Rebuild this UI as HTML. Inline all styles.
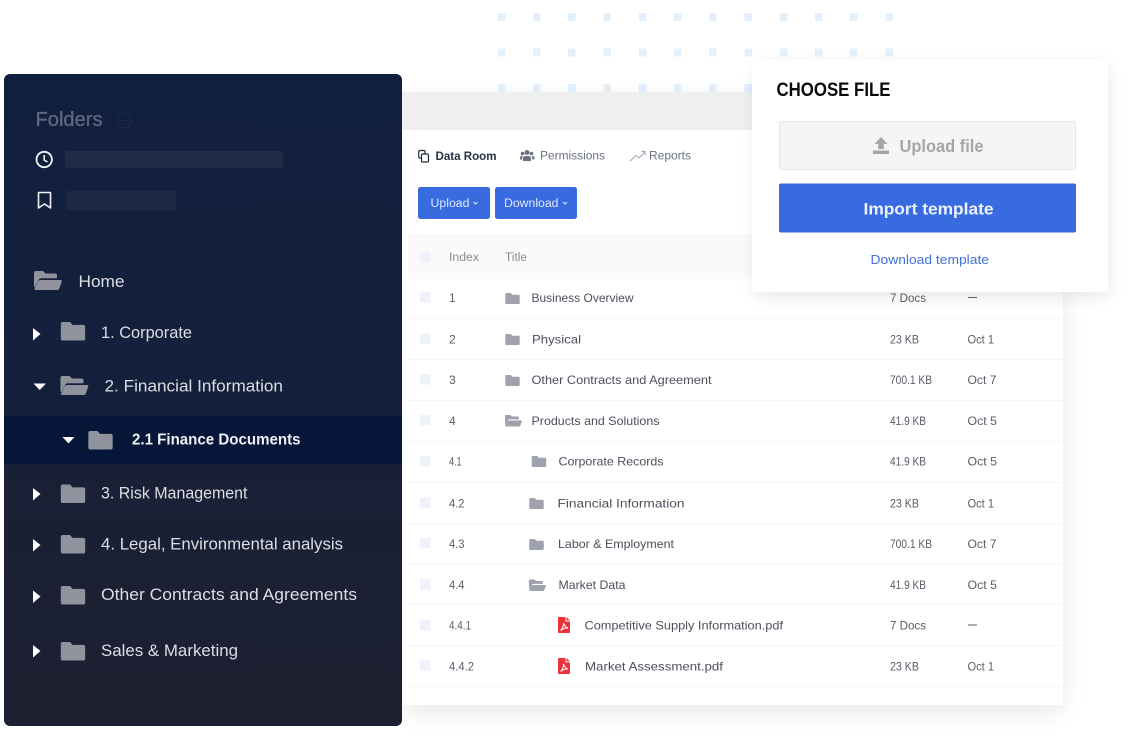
<!DOCTYPE html>
<html><head><meta charset="utf-8"><style>
html,body{margin:0;padding:0;background:#fff;width:1142px;height:748px;overflow:hidden}
svg{display:block;filter:blur(.3px)}
text{font-family:"Liberation Sans",sans-serif}
.s{font-size:16.5px;fill:#dcdee3}
.t{font-size:12px;fill:#4d4f5c}
.g{font-size:12px;fill:#5a5c68}
</style></head><body>
<svg width="1142" height="748" viewBox="0 0 1142 748" xmlns="http://www.w3.org/2000/svg">
<defs>
<linearGradient id="side" x1="0" y1="0" x2="0" y2="1"><stop offset="0" stop-color="#111f3f"/><stop offset=".5" stop-color="#14203b"/><stop offset=".65" stop-color="#1a2035"/><stop offset="1" stop-color="#1c2030"/></linearGradient>
<filter id="sh" x="-20%" y="-20%" width="140%" height="140%"><feGaussianBlur stdDeviation="12"/></filter>
<filter id="sh2" x="-20%" y="-20%" width="140%" height="140%"><feGaussianBlur stdDeviation="9"/></filter>
<symbol id="f" viewBox="0 0 25 19"><path d="M2 0H9.500L12 3H23A2 2 0 0 1 25 5V17A2 2 0 0 1 23 19H2A2 2 0 0 1 0 17V2A2 2 0 0 1 2 0Z"/></symbol>
<symbol id="o" viewBox="0 0 28 19"><path d="M0 2A2 2 0 0 1 2 0H9L11.500 2.500H21A2 2 0 0 1 23 4.500V7.300H7.500Q5.500 7.300 4.700 9L1 16H0ZM6.500 9H26.500Q28.300 9 27.700 10.800L25.300 17.500Q24.800 19 23.300 19H1.500Q0 19 .6 17.500L4.300 10.300Q5 9 6.500 9Z"/></symbol>
<symbol id="p" viewBox="0 0 12 16"><path d="M1 0H7.500V4.500H12V15A1 1 0 0 1 11 16H1A1 1 0 0 1 0 15V1A1 1 0 0 1 1 0ZM8.500 0L12 3.500H8.500Z" fill="#ec3338"/><path d="M2.500 13.500C4.500 12 6 8 5.500 6C7 9.500 8 10.500 10 11C7.500 10.800 5 11.500 2.500 13.500Z" fill="none" stroke="#fff" stroke-width="1"/></symbol>
</defs>

<g fill="#e4f0fc">
<rect x="498" y="13" width="7.500" height="8"/><rect x="533" y="13" width="7.500" height="8"/><rect x="568" y="13" width="7.500" height="8"/><rect x="603.500" y="13" width="7.500" height="8"/><rect x="639" y="13" width="7.500" height="8"/><rect x="674" y="13" width="7.500" height="8"/><rect x="709" y="13" width="7.500" height="8"/><rect x="744.500" y="13" width="7.500" height="8"/><rect x="780" y="13" width="7.500" height="8"/><rect x="815" y="13" width="7.500" height="8"/><rect x="850" y="13" width="7.500" height="8"/><rect x="885.500" y="13" width="7.500" height="8"/>
<rect x="498" y="48.500" width="7.500" height="8"/><rect x="533" y="48.500" width="7.500" height="8"/><rect x="568" y="48.500" width="7.500" height="8"/><rect x="603.500" y="48.500" width="7.500" height="8"/><rect x="639" y="48.500" width="7.500" height="8"/><rect x="674" y="48.500" width="7.500" height="8"/><rect x="709" y="48.500" width="7.500" height="8"/><rect x="744.500" y="48.500" width="7.500" height="8"/><rect x="780" y="48.500" width="7.500" height="8"/><rect x="815" y="48.500" width="7.500" height="8"/><rect x="850" y="48.500" width="7.500" height="8"/><rect x="885.500" y="48.500" width="7.500" height="8"/>
<rect x="498" y="84" width="7.500" height="8"/><rect x="533" y="84" width="7.500" height="8"/><rect x="568" y="84" width="7.500" height="8"/><rect x="603.500" y="84" width="7.500" height="8"/><rect x="639" y="84" width="7.500" height="8"/><rect x="674" y="84" width="7.500" height="8"/><rect x="709" y="84" width="7.500" height="8"/><rect x="744.500" y="84" width="7.500" height="8"/>
</g>

<rect x="404" y="100" width="659" height="612" fill="#000" opacity=".09" filter="url(#sh)"/>
<rect x="402" y="92" width="661" height="613" fill="#fff"/>
<rect x="402" y="92" width="661" height="38" fill="#efefef"/>
<rect x="408" y="234" width="655" height="45" fill="#fafafa"/>

<g fill="none" stroke="#222b3c" stroke-width="1.200"><path d="M425 154V151.500Q425 150.500 423.500 150.500H420Q418.700 150.500 418.700 152V156.500Q418.700 158 420 158H421"/><rect x="421.500" y="154" width="7" height="8" rx="1.200"/></g>
<text x="435.500" y="160" font-size="11.500" font-weight="700" fill="#2a3244" textLength="61" lengthAdjust="spacingAndGlyphs">Data Room</text>
<g fill="#6a7080"><circle cx="527" cy="152.500" r="2.500"/><circle cx="522.500" cy="153.500" r="1.800"/><circle cx="531.500" cy="153.500" r="1.800"/><path d="M523 161V158.500Q523 156 525.500 156H528.500Q531 156 531 158.500V161ZM520 159.500V158Q520 156 522 156H522.800L522 159.500ZM534.500 159.500V158Q534.500 156 532.500 156H531.700L532.500 159.500Z"/></g>
<text x="540" y="159.500" font-size="11.500" fill="#6a7080" textLength="65" lengthAdjust="spacingAndGlyphs">Permissions</text>
<path d="M630 161L636 155.500L639 158L645 152M641.500 151.500H645V155" fill="none" stroke="#a0a3ab" stroke-width="1"/>
<text x="649" y="159.500" font-size="11.500" fill="#6a7080" textLength="42" lengthAdjust="spacingAndGlyphs">Reports</text>

<rect x="418" y="187" width="72" height="32" rx="2.500" fill="#396be0"/>
<text x="430.500" y="207" font-size="11.500" fill="#dfe7fb" textLength="39" lengthAdjust="spacingAndGlyphs">Upload</text>
<path d="M473.500 202L475.500 204L477.500 202" fill="none" stroke="#dfe7fb" stroke-width="1"/>
<rect x="495" y="187" width="82" height="32" rx="2.500" fill="#396be0"/>
<text x="504" y="207" font-size="11.500" fill="#dfe7fb" textLength="54.500" lengthAdjust="spacingAndGlyphs">Download</text>
<path d="M563 202L565 204L567 202" fill="none" stroke="#dfe7fb" stroke-width="1"/>

<g fill="none" stroke="#f3f5f9" stroke-width="1">
<path d="M408 318.500H1063M408 359.500H1063M408 400.500H1063M408 441.500H1063M408 482.500H1063M408 523.500H1063M408 564.500H1063M408 604.500H1063M408 645.500H1063M408 686.500H1063"/>
</g>
<g fill="#eff1fb">
<rect x="420" y="252" width="10.500" height="10.500"/><rect x="420" y="292" width="10.500" height="10.500"/><rect x="420" y="333.500" width="10.500" height="10.500"/><rect x="420" y="374" width="10.500" height="10.500"/><rect x="420" y="415" width="10.500" height="10.500"/><rect x="420" y="456" width="10.500" height="10.500"/><rect x="420" y="497.500" width="10.500" height="10.500"/><rect x="420" y="538" width="10.500" height="10.500"/><rect x="420" y="579" width="10.500" height="10.500"/><rect x="420" y="620" width="10.500" height="10.500"/><rect x="420" y="660.500" width="10.500" height="10.500"/>
</g>
<text x="449" y="261" font-size="11.500" fill="#8a8c94" textLength="30" lengthAdjust="spacingAndGlyphs">Index</text>
<text x="505" y="261" font-size="11.500" fill="#8a8c94" textLength="22" lengthAdjust="spacingAndGlyphs">Title</text>

<text class="g" x="449" y="302">1</text><text class="g" x="449" y="343.500">2</text><text class="g" x="449" y="384">3</text><text class="g" x="449" y="425">4</text>
<text class="g" x="449" y="465.500" textLength="12.500" lengthAdjust="spacingAndGlyphs">4.1</text><text class="g" x="449" y="507.500" textLength="15.500" lengthAdjust="spacingAndGlyphs">4.2</text><text class="g" x="449" y="548" textLength="15.500" lengthAdjust="spacingAndGlyphs">4.3</text><text class="g" x="449" y="589" textLength="15.500" lengthAdjust="spacingAndGlyphs">4.4</text><text class="g" x="449" y="629.500" textLength="22" lengthAdjust="spacingAndGlyphs">4.4.1</text><text class="g" x="449" y="670.500" textLength="25" lengthAdjust="spacingAndGlyphs">4.4.2</text>

<g fill="#9fa1ac">
<use href="#f" x="505" y="293" width="15" height="11"/>
<use href="#f" x="505" y="334" width="15" height="11"/>
<use href="#f" x="505" y="375" width="15" height="11"/>
<use href="#o" x="505" y="415" width="17" height="11.500"/>
<use href="#f" x="531.500" y="456" width="15" height="11"/>
<use href="#f" x="529" y="498" width="15" height="11"/>
<use href="#f" x="529" y="539" width="15" height="11"/>
<use href="#o" x="529" y="579.500" width="17" height="11.500"/>
</g>
<use href="#p" x="558" y="617" width="12" height="16"/>
<use href="#p" x="558" y="658" width="12" height="16"/>

<text class="t" x="531.500" y="302" textLength="102" lengthAdjust="spacingAndGlyphs">Business Overview</text>
<text class="t" x="532" y="343.500" textLength="49" lengthAdjust="spacingAndGlyphs">Physical</text>
<text class="t" x="531.500" y="384" textLength="180" lengthAdjust="spacingAndGlyphs">Other Contracts and Agreement</text>
<text class="t" x="531.500" y="425" textLength="128" lengthAdjust="spacingAndGlyphs">Products and Solutions</text>
<text class="t" x="558.500" y="465.500" textLength="105" lengthAdjust="spacingAndGlyphs">Corporate Records</text>
<text class="t" x="557.500" y="507.500" textLength="127" lengthAdjust="spacingAndGlyphs">Financial Information</text>
<text class="t" x="558" y="548" textLength="116" lengthAdjust="spacingAndGlyphs">Labor &amp; Employment</text>
<text class="t" x="558.500" y="589" textLength="67" lengthAdjust="spacingAndGlyphs">Market Data</text>
<text class="t" x="584.500" y="629.500" textLength="198.500" lengthAdjust="spacingAndGlyphs">Competitive Supply Information.pdf</text>
<text class="t" x="585" y="670.500" textLength="138" lengthAdjust="spacingAndGlyphs">Market Assessment.pdf</text>

<text class="g" x="890" y="302" textLength="36" lengthAdjust="spacingAndGlyphs">7 Docs</text>
<rect x="968" y="297" width="9" height="1" fill="#5a5c68"/>
<text class="g" x="890" y="343.500" textLength="29" lengthAdjust="spacingAndGlyphs">23 KB</text>
<text class="g" x="967.500" y="343.500" textLength="26.500" lengthAdjust="spacingAndGlyphs">Oct 1</text>
<text class="g" x="890" y="384" textLength="42" lengthAdjust="spacingAndGlyphs">700.1 KB</text>
<text class="g" x="967.500" y="384" textLength="29" lengthAdjust="spacingAndGlyphs">Oct 7</text>
<text class="g" x="890" y="425" textLength="36" lengthAdjust="spacingAndGlyphs">41.9 KB</text>
<text class="g" x="967.500" y="425" textLength="29.500" lengthAdjust="spacingAndGlyphs">Oct 5</text>
<text class="g" x="890" y="465.500" textLength="36" lengthAdjust="spacingAndGlyphs">41.9 KB</text>
<text class="g" x="967.500" y="465.500" textLength="29.500" lengthAdjust="spacingAndGlyphs">Oct 5</text>
<text class="g" x="890" y="507.500" textLength="29" lengthAdjust="spacingAndGlyphs">23 KB</text>
<text class="g" x="967.500" y="507.500" textLength="26.500" lengthAdjust="spacingAndGlyphs">Oct 1</text>
<text class="g" x="890" y="548" textLength="42" lengthAdjust="spacingAndGlyphs">700.1 KB</text>
<text class="g" x="967.500" y="548" textLength="29" lengthAdjust="spacingAndGlyphs">Oct 7</text>
<text class="g" x="890" y="589" textLength="36" lengthAdjust="spacingAndGlyphs">41.9 KB</text>
<text class="g" x="967.500" y="589" textLength="29.500" lengthAdjust="spacingAndGlyphs">Oct 5</text>
<text class="g" x="890" y="629.500" textLength="36" lengthAdjust="spacingAndGlyphs">7 Docs</text>
<rect x="968" y="624.500" width="9" height="1" fill="#5a5c68"/>
<text class="g" x="890" y="670.500" textLength="29" lengthAdjust="spacingAndGlyphs">23 KB</text>
<text class="g" x="967.500" y="670.500" textLength="26.500" lengthAdjust="spacingAndGlyphs">Oct 1</text>

<rect x="756" y="66" width="352" height="230" rx="4" fill="#000" opacity=".1" filter="url(#sh2)"/>
<rect x="752" y="60" width="356" height="232" rx="4" fill="#fff"/>
<text x="776.500" y="96" font-size="19" font-weight="700" fill="#0a0a0f" textLength="114" lengthAdjust="spacingAndGlyphs">CHOOSE FILE</text>
<rect x="779.500" y="121.500" width="296" height="48" rx="2" fill="#f5f5f5" stroke="#e6e6e6"/>
<path d="M881 137L887.500 144H883.800V149H878.200V144H874.500ZM873 150.500H889V154H873Z" fill="#a6a6a6"/>
<text x="899.500" y="152" font-size="17.500" font-weight="700" fill="#a6a6a6" textLength="84" lengthAdjust="spacingAndGlyphs">Upload file</text>
<rect x="779" y="183.500" width="297" height="49" rx="2" fill="#396be0"/>
<text x="863.500" y="214.500" font-size="17" font-weight="700" fill="#eef2fd" textLength="130" lengthAdjust="spacingAndGlyphs">Import template</text>
<text x="870.500" y="264" font-size="13" fill="#3f6fdc" textLength="118.500" lengthAdjust="spacingAndGlyphs">Download template</text>

<rect x="4" y="74" width="398" height="652" rx="6" fill="url(#side)"/>
<rect x="4" y="416" width="398" height="48" fill="#051638"/>
<text x="35.500" y="126" font-size="20" fill="#5f6880" stroke="#5f6880" stroke-width=".3" textLength="67" lengthAdjust="spacingAndGlyphs">Folders</text>
<circle cx="124.500" cy="120.500" r="7.500" fill="none" stroke="#1f2a47" stroke-width="1"/><path d="M121 120.500H128" stroke="#1f2a47"/>
<rect x="65" y="151" width="218" height="17" rx="1" fill="#202c46"/>
<rect x="66" y="191" width="110" height="19" rx="1" fill="#1d2943"/>
<circle cx="44.200" cy="159.500" r="7.700" fill="none" stroke="#f2f3f5" stroke-width="1.800"/><path d="M44.200 155V160L47.500 162" fill="none" stroke="#f2f3f5" stroke-width="1.600"/>
<path d="M38.500 192.500H50.500V208L44.500 204L38.500 208Z" fill="none" stroke="#f2f3f5" stroke-width="1.600" stroke-linejoin="round"/>

<g fill="#90939e">
<use href="#o" x="34" y="271" width="28" height="19"/>
<use href="#f" x="60.500" y="322" width="25" height="18.500"/>
<use href="#o" x="60.500" y="376" width="28" height="19"/>
<use href="#f" x="88" y="431" width="25" height="18.500"/>
<use href="#f" x="60.500" y="484.500" width="25" height="18.500"/>
<use href="#f" x="60.500" y="535" width="25" height="18.500"/>
<use href="#f" x="60.500" y="586" width="25" height="18.500"/>
<use href="#f" x="60.500" y="642" width="25" height="18.500"/>
</g>
<g fill="#fff">
<path d="M33 328L40.500 334L33 340.500Z"/>
<path d="M33.500 383.500H46L39.700 390Z"/>
<path d="M62.500 437H74.500L68.500 443.500Z"/>
<path d="M33 488L40.500 494L33 500.500Z"/>
<path d="M33 539L40.500 545L33 551.500Z"/>
<path d="M33 590.500L40.500 596.500L33 603Z"/>
<path d="M33 645L40.500 651L33 657.500Z"/>
</g>
<text class="s" x="78.500" y="287" textLength="46" lengthAdjust="spacingAndGlyphs">Home</text>
<text class="s" x="101" y="338" textLength="91" lengthAdjust="spacingAndGlyphs">1. Corporate</text>
<text class="s" x="104.500" y="391.500" textLength="178.500" lengthAdjust="spacingAndGlyphs">2. Financial Information</text>
<text x="132" y="444.500" font-size="15.500" font-weight="700" fill="#eef0f4" textLength="168.500" lengthAdjust="spacingAndGlyphs">2.1 Finance Documents</text>
<text class="s" x="101" y="498.500" textLength="146.500" lengthAdjust="spacingAndGlyphs">3. Risk Management</text>
<text class="s" x="101" y="549.500" textLength="242" lengthAdjust="spacingAndGlyphs">4. Legal, Environmental analysis</text>
<text class="s" x="101" y="600" textLength="256" lengthAdjust="spacingAndGlyphs">Other Contracts and Agreements</text>
<text class="s" x="101" y="656" textLength="137" lengthAdjust="spacingAndGlyphs">Sales &amp; Marketing</text>
</svg>
</body></html>
